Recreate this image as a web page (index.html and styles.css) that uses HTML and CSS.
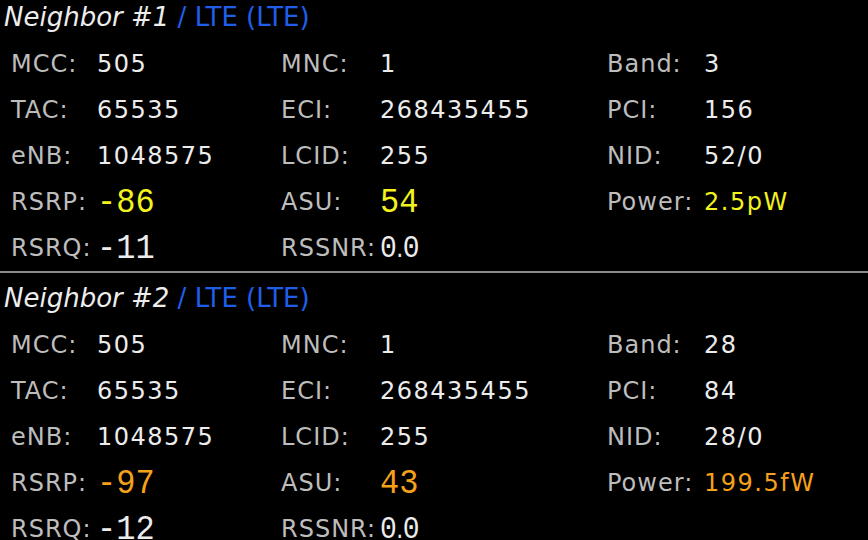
FILE: index.html
```html
<!DOCTYPE html>
<html>

<head>
    <title>Neighbor Cells</title>
    <meta name="viewport" content="width=device-width, initial-scale=1">
    <link rel="stylesheet" href="styles.css">
</head>

<body>
    <div class="cell-list">
        <section class="cell">
            <h2 class="cell-title"><span class="cell-name">Neighbor #1</span> <span class="cell-rat">/ LTE (LTE)</span></h2>
            <div class="cell-grid">
                <span class="label">MCC:</span><span class="value">505</span>
                <span class="label">MNC:</span><span class="value">1</span>
                <span class="label">Band:</span><span class="value">3</span>

                <span class="label">TAC:</span><span class="value">65535</span>
                <span class="label">ECI:</span><span class="value">268435455</span>
                <span class="label">PCI:</span><span class="value">156</span>

                <span class="label">eNB:</span><span class="value">1048575</span>
                <span class="label">LCID:</span><span class="value">255</span>
                <span class="label">NID:</span><span class="value">52/0</span>

                <span class="label">RSRP:</span><span class="value seg good">-86</span>
                <span class="label">ASU:</span><span class="value seg good">54</span>
                <span class="label">Power:</span><span class="value good">2.5pW</span>

                <span class="label">RSRQ:</span><span class="value seg">-11</span>
                <span class="label">RSSNR:</span><span class="value seg seg-small">0<span class="seg-dot">.</span>0</span>
            </div>
        </section>

        <section class="cell">
            <h2 class="cell-title"><span class="cell-name">Neighbor #2</span> <span class="cell-rat">/ LTE (LTE)</span></h2>
            <div class="cell-grid">
                <span class="label">MCC:</span><span class="value">505</span>
                <span class="label">MNC:</span><span class="value">1</span>
                <span class="label">Band:</span><span class="value">28</span>

                <span class="label">TAC:</span><span class="value">65535</span>
                <span class="label">ECI:</span><span class="value">268435455</span>
                <span class="label">PCI:</span><span class="value">84</span>

                <span class="label">eNB:</span><span class="value">1048575</span>
                <span class="label">LCID:</span><span class="value">255</span>
                <span class="label">NID:</span><span class="value">28/0</span>

                <span class="label">RSRP:</span><span class="value seg fair">-97</span>
                <span class="label">ASU:</span><span class="value seg fair">43</span>
                <span class="label">Power:</span><span class="value fair">199.5fW</span>

                <span class="label">RSRQ:</span><span class="value seg">-12</span>
                <span class="label">RSSNR:</span><span class="value seg seg-small">0<span class="seg-dot">.</span>0</span>
            </div>
        </section>
    </div>
</body>

</html>
```

FILE: styles.css
```css
body {
    margin: 0;
    padding: 0;
    background-color: #000;
    color: #ececec;
    font-family: "DejaVu Sans", sans-serif;
    font-size: 24px;
    overflow: hidden;
}

.cell {
    border-bottom: 2px solid #8a8a8a;
}

.cell + .cell {
    padding-top: 8px;
}

.cell-title {
    margin: 0 0 7px 0;
    padding-left: 4px;
    font-size: 26px;
    font-weight: normal;
    line-height: 34px;
    white-space: nowrap;
}

.cell-name {
    font-style: italic;
    color: #ededed;
}

.cell-rat {
    color: #1f5fe8;
}

.cell-grid {
    display: grid;
    grid-template-columns: 86px 184px 99px 227px 97px 1fr;
    grid-auto-rows: 46px;
    align-items: center;
    padding-left: 11px;
    letter-spacing: 1px;
    white-space: nowrap;
}

.label {
    color: #bdbdbd;
}

.value {
    color: #ececec;
    letter-spacing: 1.5px;
}

.seg {
    font-family: "Liberation Mono", monospace;
    font-size: 32px;
    letter-spacing: 0;
    display: inline-block;
    justify-self: start;
    transform: scaleY(1.1);
}

.seg-small {
    font-size: 28px;
    letter-spacing: -3px;
}

.seg-dot {
    font-size: 20px;
}

.good {
    color: #f2f21e;
}

.fair {
    color: #f5a11a;
}
```
